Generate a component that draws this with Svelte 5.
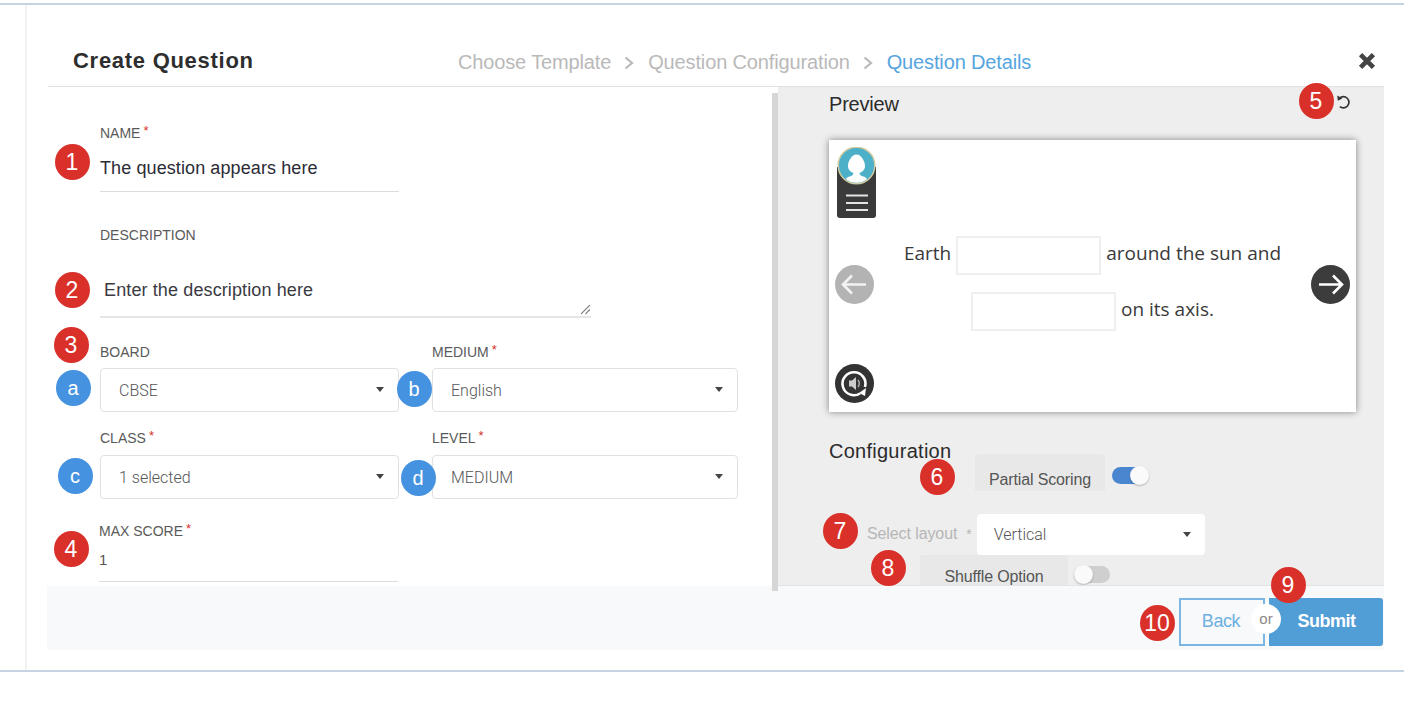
<script>
  const red = "#d9302a";
  const blue = "#4592e0";

  // numbered callouts drawn on top of the screenshot, centre in page coords
  const badges = [
    { t: "1", x: 72, y: 162, c: red },
    { t: "2", x: 72, y: 290, c: red },
    { t: "3", x: 71, y: 345, c: red },
    { t: "a", x: 73, y: 388, c: blue },
    { t: "b", x: 414, y: 389, c: blue },
    { t: "c", x: 75, y: 476, c: blue },
    { t: "d", x: 418, y: 478, c: blue },
    { t: "4", x: 71, y: 549, c: red },
    { t: "5", x: 1316, y: 101, c: red },
    { t: "6", x: 937, y: 477, c: red },
    { t: "7", x: 840, y: 531, c: red },
    { t: "8", x: 888, y: 568, c: red },
    { t: "9", x: 1288, y: 585, c: red },
    { t: "10", x: 1157, y: 623, c: red }
  ];
</script>

<div class="page">
  <div class="frame">
    <div class="sheet">
      <header class="head">
        <h1>Create Question</h1>
        <nav class="crumbs">
          <span>Choose Template</span>
          <svg class="chev" viewBox="0 0 10 14"><path d="M1.500 1.500 8 7l-6.500 5.500" /></svg>
          <span>Question Configuration</span>
          <svg class="chev" viewBox="0 0 10 14"><path d="M1.500 1.500 8 7l-6.500 5.500" /></svg>
          <span class="current">Question Details</span>
        </nav>
        <svg class="close" viewBox="0 0 14 14"><path d="M2 2l10 10M12 2 2 12" /></svg>
      </header>

      <div class="body">
        <section class="form">
          <div class="label name-label">NAME<i>*</i></div>
          <div class="line name-value">The question appears here</div>

          <div class="label desc-label">DESCRIPTION</div>
          <div class="desc-value">
            Enter the description here
            <svg class="grip" viewBox="0 0 10 10"><path d="M1 9l8-8M5 9l4-4" /></svg>
          </div>

          <div class="grid">
            <div>
              <div class="label">BOARD</div>
              <div class="select">CBSE<b></b></div>
            </div>
            <div>
              <div class="label">MEDIUM<i>*</i></div>
              <div class="select">English<b></b></div>
            </div>
            <div>
              <div class="label">CLASS<i>*</i></div>
              <div class="select">1 selected<b></b></div>
            </div>
            <div>
              <div class="label">LEVEL<i>*</i></div>
              <div class="select">MEDIUM<b></b></div>
            </div>
          </div>

          <div class="score">
            <div class="label">MAX SCORE<i>*</i></div>
            <div class="line score-value">1</div>
          </div>
        </section>

        <div class="divider"></div>

        <section class="side">
          <div class="side-head">
            <h2>Preview</h2>
            <svg class="reset" viewBox="0 0 16 14">
              <path d="M4.500 3.200A5.600 5.600 0 1 1 4.800 11.600" />
              <path class="fill" d="M2.200 .6l.6 5.200 4.600-2.400z" />
            </svg>
          </div>

          <div class="card">
            <svg class="avatar" viewBox="0 0 39 71">
              <path class="a-body" d="M0 20h39v48a3 3 0 0 1-3 3H3a3 3 0 0 1-3-3z" />
              <circle cx="19.500" cy="18.500" r="18.300" fill="#4cb0c9" stroke="#cfcba0" stroke-width="1.500" />
              <path fill="#fff" d="M19.500 7.500c-4.500 0-8.500 6.500-8.500 11.500 0 3.500 2.500 6 5.500 7-.2 1.800-1.500 2.800-4 3.600-2 .6-3 1.500-3.500 2.600a17.500 17.500 0 0 0 21 0c-.5-1.100-1.500-2-3.500-2.600-2.500-.8-3.800-1.800-4-3.600 3-1 5.500-3.500 5.500-7 0-5-4-11.500-8.500-11.500z" />
              <path class="a-lines" d="M9 48.500h22M9 56h22M9 63h22" />
            </svg>

            <div class="sentence">
              <span class="word">Earth</span><span class="blank"></span><span class="word">around the sun and</span>
            </div>
            <div class="sentence">
              <span class="blank"></span><span class="word">on its axis.</span>
            </div>

            <svg class="nav prev" viewBox="0 0 39 39">
              <circle cx="19.500" cy="19.500" r="19.500" fill="#b3b3b3" />
              <path d="M31 19.500H8M17 10.500l-9 9 9 9" />
            </svg>
            <svg class="nav next" viewBox="0 0 39 39">
              <circle cx="19.500" cy="19.500" r="19.500" fill="#3c3c3c" />
              <path d="M8 19.500h23M22 10.500l9 9-9 9" />
            </svg>
            <svg class="nav audio" viewBox="0 0 39 39">
              <circle cx="19.500" cy="19.500" r="19.500" fill="#333" />
              <path class="ring" d="M25 29.500A11.500 11.500 0 1 1 30 23" />
              <path class="tip" d="M31 24l-1 8-6-3z" />
              <path class="spk" d="M14 16.500h3l4-3.500v13l-4-3.500h-3z" />
              <path class="wave" d="M23 16c1.500 2 1.500 5 0 7" />
            </svg>
          </div>

          <h2 class="config">Configuration</h2>
          <div class="opt partial">
            <div class="opt-name">Partial Scoring</div>
            <div class="toggle on"><span></span></div>
          </div>
          <div class="layout-row">
            <span class="layout-label">Select layout</span>
            <span class="layout-star">*</span>
            <div class="select layout-select">Vertical<b></b></div>
          </div>
          <div class="opt shuffle">
            <div class="opt-name">Shuffle Option</div>
            <div class="toggle"><span></span></div>
          </div>
        </section>
      </div>

      <footer class="foot">
        <div class="actions">
          <button class="back">Back</button>
          <span class="or">or</span>
          <button class="submit">Submit</button>
        </div>
      </footer>
    </div>
  </div>

  {#each badges as b}
    <span class="badge" class:letter={b.c === blue} style="left:{b.x}px;top:{b.y}px;background:{b.c}">{b.t}</span>
  {/each}
</div>

<style>
  :global(body) {
    background: #fff;
    font-family: "Liberation Sans", Arial, sans-serif;
  }
  .page {
    position: relative;
    width: 1404px;
    height: 712px;
    padding-top: 3px;
    box-sizing: border-box;
    overflow: hidden;
  }
  .frame {
    border-top: 2px solid #c6d3e3;
    border-bottom: 2px solid #c6d3e3;
    height: 669px;
    box-sizing: border-box;
    padding-left: 25px;
  }
  .sheet {
    border-left: 2px solid #f1f3f5;
    padding-left: 21px;
    height: 100%;
    box-sizing: border-box;
  }

  .head {
    display: flex;
    align-items: center;
    height: 82px;
    box-sizing: border-box;
    padding: 28px 8px 0 25px;
    width: 1336px;
    border-bottom: 1px solid #dfe1e4;
  }
  h1 {
    margin: 2px 0 0;
    width: 180px;
    font-size: 22px;
    font-weight: 700;
    letter-spacing: 0.72px;
    color: #2e2e2e;
    white-space: nowrap;
  }
  .crumbs {
    display: flex;
    align-items: center;
    margin: 6px 0 0 205px;
    font-size: 20px;
    letter-spacing: -0.14px;
    color: #b9b9b9;
    white-space: nowrap;
  }
  .chev {
    width: 10px;
    height: 14px;
    margin: 0 14px 0 13px;
    fill: none;
    stroke: #b9b9b9;
    stroke-width: 2.200;
  }
  .current {
    color: #56a5de;
  }
  .close {
    width: 18px;
    height: 18px;
    margin-left: auto;
    margin-top: 2px;
    fill: none;
    stroke: #444;
    stroke-width: 3.600;
  }

  .body {
    display: flex;
    width: 1336px;
    height: 499px;
  }
  .form {
    width: 724px;
    flex: none;
    box-sizing: border-box;
    padding: 37px 0 0 52px;
    overflow: hidden;
  }
  .label {
    height: 18px;
    line-height: 18px;
    font-size: 14px;
    letter-spacing: 0;
    color: #5a5a5a;
    white-space: nowrap;
  }
  .label i {
    font-style: normal;
    color: #d9302a;
    font-size: 13px;
    margin-left: 3px;
    position: relative;
    top: -3px;
  }
  .line {
    border-bottom: 1px solid #dcdcdc;
    box-sizing: border-box;
    color: #2b2b36;
    font-size: 18px;
    line-height: 24px;
    letter-spacing: 0.1px;
    width: 299px;
  }
  .name-value {
    height: 50px;
    padding-top: 14px;
  }
  .desc-label {
    margin-top: 34px;
  }
  .desc-value {
    position: relative;
    width: 491px;
    height: 74px;
    box-sizing: border-box;
    padding: 34px 0 0 4px;
    border-bottom: 2px solid #e6e6e6;
    font-size: 18px;
    line-height: 24px;
    letter-spacing: 0.12px;
    color: #3a3a42;
  }
  .grip {
    position: absolute;
    right: 0;
    bottom: 1px;
    width: 11px;
    height: 11px;
    fill: none;
    stroke: #777;
    stroke-width: 1;
  }
  .grid {
    display: grid;
    grid-template-columns: 299px 306px;
    column-gap: 33px;
    row-gap: 17px;
    margin-top: 25px;
  }
  .grid > div:nth-child(n + 3) .select {
    margin-top: 8px;
  }
  .select {
    position: relative;
    height: 44px;
    margin-top: 7px;
    box-sizing: border-box;
    padding-left: 18px;
    border: 1px solid #e1e1e1;
    border-radius: 4px;
    background: #fff;
    font-family: Roboto, "Liberation Sans", sans-serif;
    font-size: 16px;
    font-weight: 300;
    line-height: 43px;
    color: #555;
  }
  .select b {
    position: absolute;
    right: 14px;
    top: 18px;
    border: 4.500px solid transparent;
    border-top: 5px solid #444;
    border-bottom: 0;
  }
  .score {
    margin: 23px 0 0 -1px;
  }
  .score-value {
    height: 42px;
    padding-top: 8px;
    font-size: 15px;
    color: #555;
  }

  .divider {
    flex: none;
    width: 6px;
    height: 498px;
    margin-top: 6px;
    background: #d6d6d6;
    position: relative;
    z-index: 1;
  }
  .side {
    flex: 1;
    height: 499px;
    box-sizing: border-box;
    padding-left: 51px;
    background: #eee;
    border-bottom: 1px solid #e4e4e4;
    overflow: hidden;
  }
  h2 {
    margin: 0;
    font-size: 20px;
    font-weight: 400;
    letter-spacing: -0.2px;
    color: #2b2b2b;
  }
  .side-head {
    display: flex;
    justify-content: space-between;
    align-items: flex-start;
    height: 53px;
    box-sizing: border-box;
    padding: 6px 33px 0 0;
  }
  .reset {
    width: 16px;
    height: 14px;
    margin-top: 2px;
    fill: none;
    stroke: #333;
    stroke-width: 1.700;
  }
  .reset .fill {
    fill: #333;
    stroke: none;
  }
  .card {
    position: relative;
    width: 527px;
    height: 272px;
    box-sizing: border-box;
    padding-top: 96px;
    background: #fff;
    box-shadow: 0 0 7px rgba(0, 0, 0, 0.45);
    font-family: "Open Sans", sans-serif;
    font-size: 19px;
    color: #3a3a3a;
  }
  .avatar {
    position: absolute;
    left: 8px;
    top: 7px;
    width: 39px;
    height: 71px;
  }
  .a-body {
    fill: #3a3a3a;
  }
  .a-lines {
    stroke: #e4e4e4;
    stroke-width: 2;
    fill: none;
  }
  .sentence {
    display: flex;
    justify-content: center;
    align-items: center;
    gap: 5px;
    height: 39px;
    margin-bottom: 17px;
    white-space: nowrap;
  }
  .word {
    padding-bottom: 5px;
  }
  .blank {
    width: 145px;
    height: 39px;
    box-sizing: border-box;
    border: 2px solid #efefef;
  }
  .nav {
    position: absolute;
    width: 39px;
    height: 39px;
    fill: none;
    stroke: #fff;
    stroke-width: 2.600;
  }
  .nav circle {
    stroke: none;
  }
  .prev {
    left: 6px;
    top: 125px;
    stroke: #f2f2f2;
  }
  .next {
    right: 6px;
    top: 125px;
  }
  .audio {
    left: 6px;
    top: 224px;
  }
  .ring {
    stroke-width: 2.600;
  }
  .tip {
    fill: #fff;
    stroke: none;
  }
  .spk {
    fill: #ccc;
    stroke: none;
  }
  .wave {
    stroke: #aaa;
    stroke-width: 1.500;
  }
  .config {
    margin-top: 27px;
    line-height: 24px;
    height: 24px;
    letter-spacing: 0.26px;
  }
  .opt {
    display: flex;
    align-items: flex-start;
    gap: 7px;
  }
  .opt-name {
    box-sizing: border-box;
    background: #e8e8e8;
    border-radius: 3px 3px 0 0;
    text-align: center;
    font-size: 16px;
    line-height: 18px;
    letter-spacing: -0.15px;
    color: #555;
  }
  .partial {
    margin: -9px 0 0 146px;
  }
  .partial .opt-name {
    width: 130px;
    height: 37px;
    padding-top: 17px;
  }
  .toggle {
    position: relative;
    width: 36px;
    height: 17px;
    border-radius: 9px;
    background: #cfcfcf;
    margin-top: 11px;
  }
  .toggle span {
    position: absolute;
    left: 0;
    top: -1px;
    width: 19px;
    height: 19px;
    border-radius: 50%;
    background: #fafafa;
    box-shadow: 0 1px 2px rgba(0, 0, 0, 0.25);
  }
  .toggle.on {
    background: #4a86d0;
    margin-top: 13px;
  }
  .toggle.on span {
    left: auto;
    right: -1px;
  }
  .layout-row {
    display: flex;
    align-items: center;
    height: 40px;
    margin: 23px 0 0 38px;
    font-size: 16px;
    letter-spacing: -0.1px;
    color: #b6b6b6;
  }
  .layout-star {
    margin: 0 5px 0 9px;
    font-size: 14px;
  }
  .layout-select {
    width: 228px;
    height: 41px;
    margin-top: 0;
    padding-left: 17px;
    border: 0;
    line-height: 41px;
    letter-spacing: 0;
  }
  .layout-select b {
    right: 14px;
  }
  .shuffle {
    margin: 1px 0 0 91px;
    gap: 6px;
  }
  .shuffle .opt-name {
    width: 148px;
    height: 40px;
    padding-top: 13px;
  }

  .foot {
    display: flex;
    justify-content: flex-end;
    width: 1337px;
    height: 64px;
    margin-left: -1px;
    box-sizing: border-box;
    padding: 12px 1px 0 0;
    background: #f8f9fb;
  }
  .actions {
    position: relative;
    display: flex;
    gap: 4px;
    height: 48px;
  }
  button {
    margin: 0;
    padding: 0 0 2px;
    font-family: "Liberation Sans", Arial, sans-serif;
    font-size: 18px;
    letter-spacing: -0.2px;
    cursor: pointer;
  }
  .back {
    width: 86px;
    border: 2px solid #7db6e3;
    background: transparent;
    color: #6cb0e0;
    padding-right: 2px;
    letter-spacing: -0.4px;
  }
  .submit {
    width: 114px;
    border: 0;
    border-radius: 0 3px 3px 0;
    background: #519dd6;
    color: #fff;
    font-weight: 700;
    letter-spacing: -0.5px;
    padding-left: 1px;
  }
  .or {
    position: absolute;
    left: 72px;
    top: 6px;
    width: 30px;
    height: 30px;
    border-radius: 50%;
    background: #fff;
    text-align: center;
    font-size: 15px;
    line-height: 29px;
    color: #888;
  }
  .badge {
    position: absolute;
    width: 35px;
    height: 36px;
    margin: -18px 0 0 -17.5px;
    border-radius: 50%;
    text-align: center;
    color: #fff;
    font-size: 23px;
    line-height: 36px;
    z-index: 2;
  }
  .badge.letter {
    font-size: 20px;
  }
</style>
